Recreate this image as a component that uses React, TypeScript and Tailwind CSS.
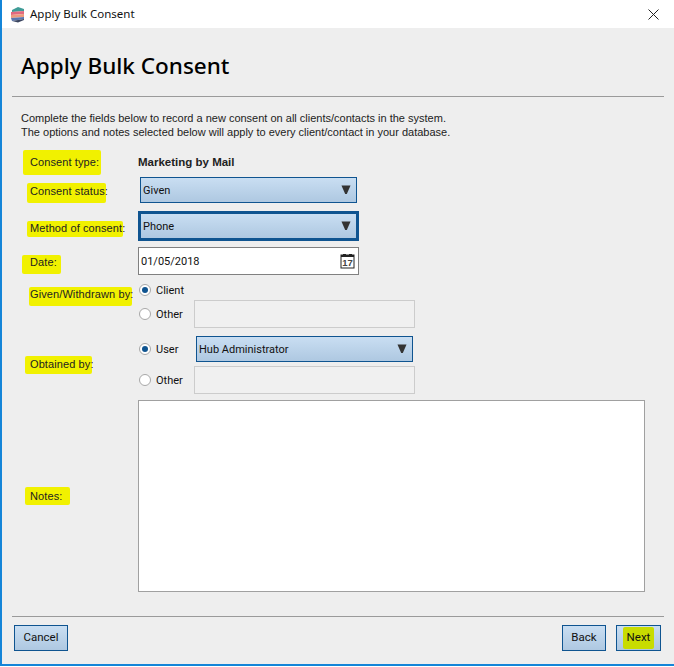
const ui = "font-['Liberation_Sans',Arial,sans-serif]";
const noto = "font-['Noto_Sans',sans-serif]";
const ctl = "font-['Roboto',sans-serif]";

function Arrow() {
  return (
    <svg width="10" height="10" viewBox="0 0 10 10" className="shrink-0">
      <polygon points="0.5,0.5 9.5,0.5 5.8,9 4.2,9" fill="#333333" />
    </svg>
  );
}

function Calendar() {
  return (
    <svg width="16" height="16" viewBox="0 0 16 16">
      <rect x="1" y="2" width="13" height="13" fill="#ffffff" stroke="#222222" />
      <rect x="1" y="2" width="13" height="2" fill="#222222" />
      <rect x="3" y="1" width="3" height="2" fill="#222222" />
      <rect x="9" y="1" width="3" height="2" fill="#222222" />
      <text x="7.5" y="13" textAnchor="middle" fontSize="9.5" fontWeight="700" fontFamily="Liberation Sans" fill="#444444">17</text>
    </svg>
  );
}

function Select({ value, className }: { value: string; className: string }) {
  return (
    <div className={`flex items-center justify-between bg-gradient-to-b from-[#c9def2] to-[#aec8e1] border-[#0f5490] pl-[2px] pr-[5px] ${ctl} text-[11px] text-[#111] ${className}`}>
      <span className="pt-[3px]">{value}</span>
      <Arrow />
    </div>
  );
}

function Radio({ checked, label }: { checked?: boolean; label: string }) {
  return (
    <div className="flex items-center gap-[5px]">
      <span className="w-[12px] h-[12px] rounded-full bg-white border border-[#a8a8a8] flex items-center justify-center shrink-0">
        {checked && <span className="w-[6px] h-[6px] rounded-full bg-[#0f5490]" />}
      </span>
      <span className={`pt-[2px] ${ctl} text-[11px] text-[#111]`}>{label}</span>
    </div>
  );
}

function Label({ children, className }: { children: string; className: string }) {
  return (
    <span className={`inline-flex items-center bg-[#f1f100] rounded-[2px] text-[11px] tracking-[0.1px] text-[#222] whitespace-nowrap ${ui} ${className}`}>
      {children}
    </span>
  );
}

function Button({ children, className }: { children: React.ReactNode; className: string }) {
  return (
    <button className={`h-[26px] flex items-center justify-center border border-[#0f5490] bg-gradient-to-b from-[#c9def2] to-[#aec8e1] ${ctl} text-[11.5px] text-[#111] ${className}`}>
      {children}
    </button>
  );
}

function Disabled({ className }: { className?: string }) {
  return <div className={`h-[28px] w-[221px] bg-[#f0f0f0] border border-[#cccccc] ${className ?? ""}`} />;
}

export default function App() {
  return (
    <div className="w-[674px] h-[667px] bg-white pb-[1px]">
      <div className="h-[666px] flex flex-col border-l-2 border-b-2 border-[#1485d8] bg-[#eeeeee]">
        <header className="h-[28px] shrink-0 bg-white flex items-center pl-[8px] pr-[15px]">
          <svg width="16" height="17" viewBox="0 0 16 17" className="shrink-0">
            <path d="M2 4 L8 1 L14 3 V5 L2 6 Z" fill="#3f9c97" />
            <path d="M1 6 L14 5 V8 L1 9 Z" fill="#e2697f" />
            <path d="M1 9 L14 8 V11 L1 12 Z" fill="#ec9a7e" />
            <path d="M1 12 L14 11 V13 L2 15 Z" fill="#5a76b0" />
            <path d="M2 15 L14 13 V14 L8 16.5 Z" fill="#3b4560" />
          </svg>
          <span className={`ml-[4px] ${noto} text-[11.5px] text-[#111]`}>Apply Bulk Consent</span>
          <svg width="11" height="11" viewBox="0 0 11 11" className="ml-auto">
            <path d="M0.5 0.5 L10.5 10.5 M10.5 0.5 L0.5 10.5" stroke="#222222" strokeWidth="1" />
          </svg>
        </header>

        <div className="flex-1 flex flex-col px-[10px]">
          <h1 className={`h-[69px] flex items-center pl-[9px] pt-[9px] ${noto} text-[22.5px] leading-none font-medium text-black border-b border-[#9a9a9a]`}>
            Apply Bulk Consent
          </h1>

          <p className={`mt-[14px] pl-[9px] ${ui} text-[11px] leading-[14px] text-[#222]`}>
            Complete the fields below to record a new consent on all clients/contacts in the system.
            <br />
            The options and notes selected below will apply to every client/contact in your database.
          </p>

          <div className="mt-[11px] flex flex-col h-[442px]">
            <div className="h-[25px] flex items-center">
              <Label className="ml-[11px] pl-[7px] h-[25px] w-[78px]">Consent type:</Label>
              <span className={`ml-[37px] ${ui} text-[11.5px] font-bold text-[#222]`}>Marketing by Mail</span>
            </div>

            <div className="mt-[2px] h-[26px] flex items-center">
              <div className="w-[128px] shrink-0">
                <Label className="ml-[15px] pl-[3px] pb-[2px] h-[20px] w-[79px]">Consent status:</Label>
              </div>
              <Select value="Given" className="border w-[217px] h-[26px]" />
            </div>

            <div className="mt-[8px] h-[30px] flex items-center">
              <div className="w-[126px] shrink-0">
                <Label className="ml-[15px] pl-[3px] pb-[2px] h-[16px] w-[96px]">Method of consent:</Label>
              </div>
              <Select value="Phone" className="border-[3px] w-[221px] h-[30px]" />
            </div>

            <div className="mt-[6px] h-[28px] flex items-center">
              <div className="w-[126px] shrink-0">
                <Label className="ml-[10px] pl-[8px] pb-[4px] h-[19px] w-[39px]">Date:</Label>
              </div>
              <div className={`w-[221px] h-[28px] bg-white border border-[#808080] flex items-center justify-between px-[2px] ${ctl} text-[11px] text-[#111]`}>
                <span className="pt-[2px]">01/05/2018</span>
                <Calendar />
              </div>
            </div>

            <div className="mt-[5px] h-[48px] flex">
              <div className="w-[126px] shrink-0">
                <Label className="ml-[17px] pl-[1px] pb-[4px] h-[19px] w-[103px]">Given/Withdrawn by:</Label>
              </div>
              <div className="flex flex-col">
                <div className="h-[20px] flex items-center pl-[1px]">
                  <Radio checked label="Client" />
                </div>
                <div className="h-[28px] flex items-center pl-[1px]">
                  <div className="w-[55px]">
                    <Radio label="Other" />
                  </div>
                  <Disabled />
                </div>
              </div>
            </div>

            <div className="mt-[8px] h-[58px] flex">
              <div className="w-[126px] shrink-0 flex items-center">
                <Label className="ml-[13px] pl-[5px] pb-[2px] h-[18px] w-[67px]">Obtained by:</Label>
              </div>
              <div className="flex flex-col pl-[1px]">
                <div className="h-[26px] flex items-center">
                  <div className="w-[57px]">
                    <Radio checked label="User" />
                  </div>
                  <Select value="Hub Administrator" className="border w-[217px] h-[26px]" />
                </div>
                <div className="mt-[4px] h-[28px] flex items-center">
                  <div className="w-[55px]">
                    <Radio label="Other" />
                  </div>
                  <Disabled />
                </div>
              </div>
            </div>

            <div className="mt-[6px] h-[192px] flex">
              <div className="w-[126px] shrink-0 flex items-center">
                <Label className="ml-[13px] pl-[5px] h-[18px] w-[45px]">Notes:</Label>
              </div>
              <div className="w-[507px] h-[192px] bg-white border border-[#a0a0a0]" />
            </div>
          </div>

          <footer className="mt-[24px] border-t border-[#9a9a9a] pt-[8px] flex items-center">
            <Button className="ml-[2px] w-[54px]">Cancel</Button>
            <Button className="ml-auto w-[44px]">Back</Button>
            <Button className="ml-[10px] mr-[3px] w-[45px]">
              <span className="bg-[#c8dc00] px-[4px] py-[2px] rounded-[2px]">Next</span>
            </Button>
          </footer>
        </div>
      </div>
    </div>
  );
}
